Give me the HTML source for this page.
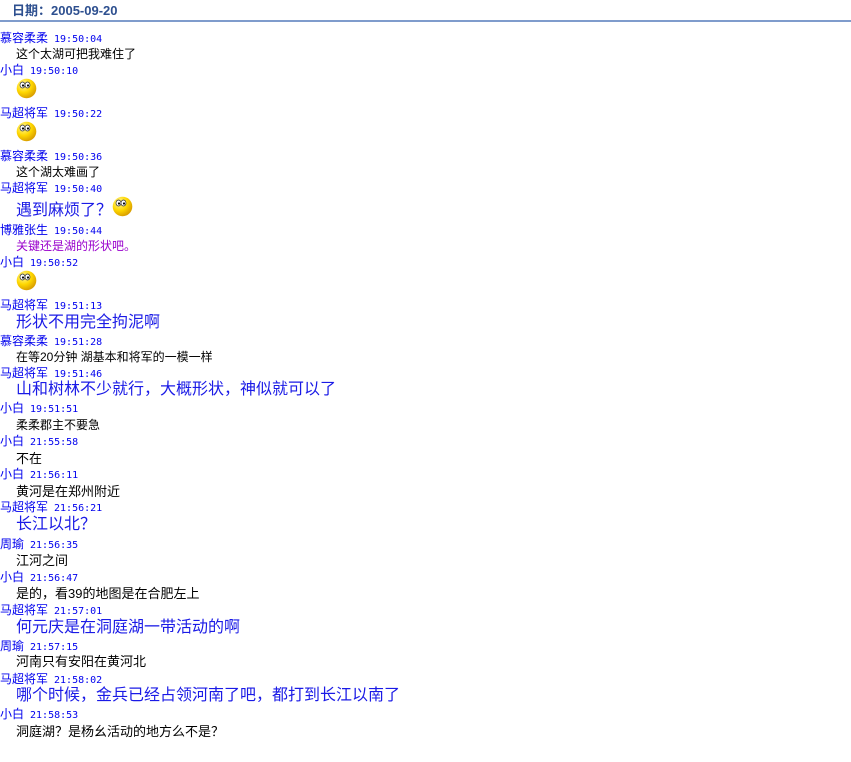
<!DOCTYPE html>
<html><head><meta charset="utf-8"><style>
body{margin:0;width:851px;height:762px;background:#fff;position:relative;overflow:hidden;font-family:"Liberation Sans","Noto Sans CJK SC","WenQuanYi Zen Hei",sans-serif}
.h{position:absolute;left:12px;top:3px;font-size:13px;font-weight:bold;color:#2d4f8f;line-height:15px;letter-spacing:0}
.hr{position:absolute;left:0;top:20px;width:851px;height:2px;background:#7f9ccc}
.n{position:absolute;left:0;font-size:12px;line-height:14px;color:#0000ee;white-space:nowrap}
.n span{font-family:"DejaVu Sans Mono","Liberation Mono",monospace;font-size:10px;margin-left:6px}
.m{position:absolute;left:16px;font-size:12px;line-height:14px;color:#000;white-space:nowrap;margin-top:1px}
.b{position:absolute;left:16px;font-size:16px;line-height:20px;color:#1a1ae6;white-space:nowrap}
.p{color:#9900cc}
.s{position:absolute;width:21px;height:21px}
</style></head><body>
<div class="h">日期：2005-09-20</div>
<div class="hr"></div>
<svg width="0" height="0" style="position:absolute"><defs>
<radialGradient id="g" cx="0.35" cy="0.3" r="0.8"><stop offset="0" stop-color="#fff7a0"/><stop offset="0.5" stop-color="#ffd800"/><stop offset="1" stop-color="#d09000"/></radialGradient>
<g id="sm"><circle cx="10.5" cy="10.5" r="9.8" fill="url(#g)"/><ellipse cx="6.5" cy="7" rx="2.5" ry="3" fill="#fff" stroke="#333" stroke-width=".7"/><ellipse cx="11.5" cy="7" rx="2.5" ry="3" fill="#fff" stroke="#333" stroke-width=".7"/><circle cx="7" cy="7.5" r="1.1" fill="#000"/><circle cx="12" cy="7.5" r="1.1" fill="#000"/></g>
</defs></svg>

<div class="n" style="top:31px">慕容柔柔<span>19:50:04</span></div>
<div class="m" style="top:46px">这个太湖可把我难住了</div>
<div class="n" style="top:63px">小白<span>19:50:10</span></div>
<svg class="s" style="left:16px;top:78px"><use href="#sm"/></svg>
<div class="n" style="top:106px">马超将军<span>19:50:22</span></div>
<svg class="s" style="left:16px;top:121px"><use href="#sm"/></svg>
<div class="n" style="top:149px">慕容柔柔<span>19:50:36</span></div>
<div class="m" style="top:164px">这个湖太难画了</div>
<div class="n" style="top:181px">马超将军<span>19:50:40</span></div>
<div class="b" style="top:201px">遇到麻烦了？</div>
<svg class="s" style="left:112px;top:196px"><use href="#sm"/></svg>
<div class="n" style="top:223px">博雅张生<span>19:50:44</span></div>
<div class="m p" style="top:238px">关键还是湖的形状吧。</div>
<div class="n" style="top:255px">小白<span>19:50:52</span></div>
<svg class="s" style="left:16px;top:270px"><use href="#sm"/></svg>
<div class="n" style="top:298px">马超将军<span>19:51:13</span></div>
<div class="b" style="top:313px">形状不用完全拘泥啊</div>
<div class="n" style="top:334px">慕容柔柔<span>19:51:28</span></div>
<div class="m" style="top:349px">在等20分钟 湖基本和将军的一模一样</div>
<div class="n" style="top:366px">马超将军<span>19:51:46</span></div>
<div class="b" style="top:380px">山和树林不少就行，大概形状，神似就可以了</div>
<div class="n" style="top:401px">小白<span>19:51:51</span></div>
<div class="m" style="top:417px">柔柔郡主不要急</div>
<div class="n" style="top:434px">小白<span>21:55:58</span></div>
<div class="m" style="top:450px;font-size:13px;line-height:16px">不在</div>
<div class="n" style="top:467px">小白<span>21:56:11</span></div>
<div class="m" style="top:483px;font-size:13px;line-height:16px">黄河是在郑州附近</div>
<div class="n" style="top:500px">马超将军<span>21:56:21</span></div>
<div class="b" style="top:515px">长江以北？</div>
<div class="n" style="top:537px">周瑜<span>21:56:35</span></div>
<div class="m" style="top:552px;font-size:13px;line-height:16px">江河之间</div>
<div class="n" style="top:570px">小白<span>21:56:47</span></div>
<div class="m" style="top:585px;font-size:13px;line-height:16px">是的，看39的地图是在合肥左上</div>
<div class="n" style="top:603px">马超将军<span>21:57:01</span></div>
<div class="b" style="top:618px">何元庆是在洞庭湖一带活动的啊</div>
<div class="n" style="top:639px">周瑜<span>21:57:15</span></div>
<div class="m" style="top:653px;font-size:13px;line-height:16px">河南只有安阳在黄河北</div>
<div class="n" style="top:672px">马超将军<span>21:58:02</span></div>
<div class="b" style="top:686px">哪个时候，金兵已经占领河南了吧，都打到长江以南了</div>
<div class="n" style="top:707px">小白<span>21:58:53</span></div>
<div class="m" style="top:723px;font-size:13px;line-height:16px">洞庭湖？是杨幺活动的地方么不是？</div>
</body></html>
